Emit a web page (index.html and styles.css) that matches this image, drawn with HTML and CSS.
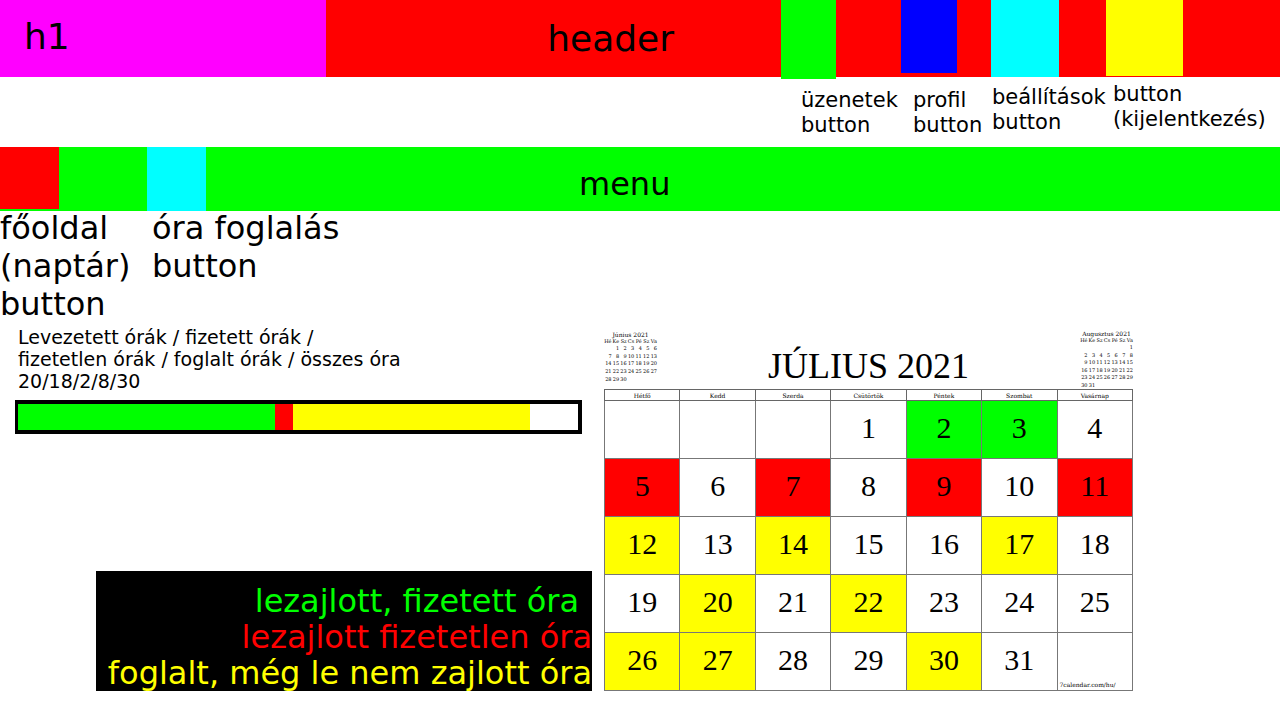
FILE: index.html
```html
<!DOCTYPE html>
<html lang="hu">
<head>
<meta charset="utf-8">
<meta name="viewport" content="width=device-width, initial-scale=1">
<title>Óra foglalás</title>
<link rel="stylesheet" href="styles.css">
</head>
<body>
<header class="header">
  <h1 class="brand">h1</h1>
  <span class="header-title">header</span>
  <button class="swatch messages" type="button" aria-labelledby="l-messages"></button>
  <button class="swatch profile" type="button" aria-labelledby="l-profile"></button>
  <button class="swatch settings" type="button" aria-labelledby="l-settings"></button>
  <button class="swatch logout" type="button" aria-labelledby="l-logout"></button>
</header>
<div class="header-labels">
  <span class="tag tag-low" id="l-messages">üzenetek<br>button</span>
  <span class="tag tag-low" id="l-profile">profil<br>button</span>
  <span class="tag tag-mid" id="l-settings">beállítások<br>button</span>
  <span class="tag" id="l-logout">button<br>(kijelentkezés)</span>
</div>
<nav class="menu">
  <button class="swatch home" type="button" aria-labelledby="l-home"></button>
  <button class="swatch booking" type="button" aria-labelledby="l-booking"></button>
  <span class="menu-title">menu</span>
</nav>
<div class="menu-labels">
  <span id="l-home">főoldal<br>(naptár)<br>button</span>
  <span id="l-booking">óra foglalás<br>button</span>
</div>
<main class="main">
  <section class="side">
    <div class="stats">
      <p class="stats-text">Levezetett órák / fizetett órák /<br>fizetetlen órák / foglalt órák / összes óra<br>20/18/2/8/30</p>
      <div class="bar">
        <div class="green" style="width:45.9%"></div>
        <div class="red" style="width:3.2%"></div>
        <div class="yellow" style="width:42.3%"></div>
      </div>
    </div>
    <ul class="legend">
      <li class="legend-paid">lezajlott, fizetett óra</li>
      <li class="legend-unpaid">lezajlott fizetetlen óra</li>
      <li class="legend-booked">foglalt, még le nem zajlott óra</li>
    </ul>
  </section>
  <section class="calendar">
    <div class="calendar-head">
      <table class="mini mini-june">
        <caption>Június 2021</caption>
        <thead><tr><th>Hé</th><th>Ke</th><th>Sz</th><th>Cs</th><th>Pé</th><th>Sz</th><th>Va</th></tr></thead>
        <tbody>
          <tr><td></td><td>1</td><td>2</td><td>3</td><td>4</td><td>5</td><td>6</td></tr>
          <tr><td>7</td><td>8</td><td>9</td><td>10</td><td>11</td><td>12</td><td>13</td></tr>
          <tr><td>14</td><td>15</td><td>16</td><td>17</td><td>18</td><td>19</td><td>20</td></tr>
          <tr><td>21</td><td>22</td><td>23</td><td>24</td><td>25</td><td>26</td><td>27</td></tr>
          <tr><td>28</td><td>29</td><td>30</td><td></td><td></td><td></td><td></td></tr>
        </tbody>
      </table>
      <h2 class="month">JÚLIUS 2021</h2>
      <table class="mini">
        <caption>Augusztus 2021</caption>
        <thead><tr><th>Hé</th><th>Ke</th><th>Sz</th><th>Cs</th><th>Pé</th><th>Sz</th><th>Va</th></tr></thead>
        <tbody>
          <tr><td></td><td></td><td></td><td></td><td></td><td></td><td>1</td></tr>
          <tr><td>2</td><td>3</td><td>4</td><td>5</td><td>6</td><td>7</td><td>8</td></tr>
          <tr><td>9</td><td>10</td><td>11</td><td>12</td><td>13</td><td>14</td><td>15</td></tr>
          <tr><td>16</td><td>17</td><td>18</td><td>19</td><td>20</td><td>21</td><td>22</td></tr>
          <tr><td>23</td><td>24</td><td>25</td><td>26</td><td>27</td><td>28</td><td>29</td></tr>
          <tr><td>30</td><td>31</td><td></td><td></td><td></td><td></td><td></td></tr>
        </tbody>
      </table>
    </div>
    <table class="days">
      <thead><tr><th>Hétfő</th><th>Kedd</th><th>Szerda</th><th>Csütörtök</th><th>Péntek</th><th>Szombat</th><th>Vasárnap</th></tr></thead>
      <tbody>
        <tr><td></td><td></td><td></td><td>1</td><td class="green">2</td><td class="green">3</td><td>4</td></tr>
        <tr><td class="red">5</td><td>6</td><td class="red">7</td><td>8</td><td class="red">9</td><td>10</td><td class="red">11</td></tr>
        <tr><td class="yellow">12</td><td>13</td><td class="yellow">14</td><td>15</td><td>16</td><td class="yellow">17</td><td>18</td></tr>
        <tr><td>19</td><td class="yellow">20</td><td>21</td><td class="yellow">22</td><td>23</td><td>24</td><td>25</td></tr>
        <tr><td class="yellow">26</td><td class="yellow">27</td><td>28</td><td>29</td><td class="yellow">30</td><td>31</td><td class="credit"><a href="#">7calendar.com/hu/</a></td></tr>
      </tbody>
    </table>
  </section>
</main>
</body>
</html>
```
FILE: styles.css
```css
* { box-sizing: border-box; }

body {
  margin: 0;
  background: #fff;
  color: #000;
  font-family: "DejaVu Sans", sans-serif;
}

h1, h2, p, ul { margin: 0; padding: 0; font-weight: normal; }

.green { background: #0f0; }
.red { background: #f00; }
.yellow { background: #ff0; }

.swatch { border: 0; padding: 0; cursor: pointer; }

.header {
  display: grid;
  grid-template-columns: 326fr 455fr 55fr 65fr 56fr 34fr 68fr 47fr 77fr 97fr;
  align-items: start;
  height: 77px;
  background: #f00;
}

.brand {
  height: 77px;
  padding: 16px 0 0 24px;
  background: #f0f;
  font-size: 36px;
  line-height: 42px;
}

.header-title {
  padding: 18px 107px 0 0;
  text-align: right;
  font-size: 36px;
  line-height: 42px;
}

.messages { grid-column: 3; height: 79px; background: #0f0; }
.profile { grid-column: 5; height: 73px; background: #00f; }
.settings { grid-column: 7; height: 77px; background: #0ff; }
.logout { grid-column: 9; height: 76px; background: #ff0; }

.header-labels {
  display: grid;
  grid-template-columns: 112fr 79fr 121fr 167fr;
  height: 70px;
  padding-left: 62.58%;
  font-size: 21px;
  line-height: 25px;
  white-space: nowrap;
}

.tag { padding-top: 5px; min-width: 0; }
.tag-mid { padding-top: 8px; }
.tag-low { padding-top: 11px; }

.menu {
  display: grid;
  grid-template-columns: 59fr 88fr 59fr 1074fr;
  align-items: start;
  height: 64px;
  background: #0f0;
}

.home { height: 62px; background: #f00; }
.booking { grid-column: 3; height: 64px; background: #0ff; }

.menu-title {
  padding: 18px 0 0 373px;
  font-size: 32px;
  line-height: 38px;
}

.menu-labels {
  display: grid;
  grid-template-columns: 152px 1fr;
  margin-top: -2px;
  font-size: 32px;
  line-height: 38px;
}

.main {
  display: grid;
  grid-template-columns: 604fr 529fr 147fr;
  padding-top: 3px;
}

.side {
  display: flex;
  flex-direction: column;
  justify-content: space-between;
}

.stats { padding: 0 22px 0 15px; }

.stats-text {
  padding-left: 3px;
  font-size: 19px;
  line-height: 22px;
}

.bar {
  display: flex;
  height: 34px;
  margin-top: 8px;
  border: 4px solid #000;
  border-left-width: 3px;
}

.legend {
  margin: 0 12px 0 96px;
  padding-top: 12px;
  background: #000;
  list-style: none;
  text-align: right;
  white-space: nowrap;
  font-size: 32px;
  line-height: 36px;
}

.legend-paid { padding-right: 13px; color: #0f0; }
.legend-unpaid { color: #f00; }
.legend-booked { color: #ff0; }

.calendar { font-family: "Liberation Serif", serif; }

.calendar-head {
  display: flex;
  justify-content: space-between;
  height: 63px;
  padding-top: 4px;
}

.month {
  padding-top: 15px;
  font-size: 36px;
  line-height: 42px;
}

.mini {
  width: 53px;
  height: 52px;
  table-layout: fixed;
  border-collapse: collapse;
  font-family: "DejaVu Serif", serif;
  font-size: 5px;
  line-height: 7px;
}

.mini-june { height: 45px; margin-top: 1px; }
.mini caption { font-size: 6px; white-space: nowrap; }
.mini th, .mini td { padding: 0; font-weight: normal; text-align: right; }

.days {
  width: 100%;
  table-layout: fixed;
  border-collapse: collapse;
}

.days th {
  height: 11px;
  padding: 0;
  border: 1px solid #666;
  font: 6px/9px "DejaVu Serif", serif;
}

.days td {
  height: 58px;
  padding: 0 0 3px;
  border: 1px solid #777;
  text-align: center;
  font-size: 30px;
  line-height: 34px;
}

.days .credit {
  padding: 0 0 1px 2px;
  vertical-align: bottom;
  text-align: left;
  font: 6px/8px "DejaVu Serif", serif;
}

.credit a { color: #000; text-decoration: none; }
```
